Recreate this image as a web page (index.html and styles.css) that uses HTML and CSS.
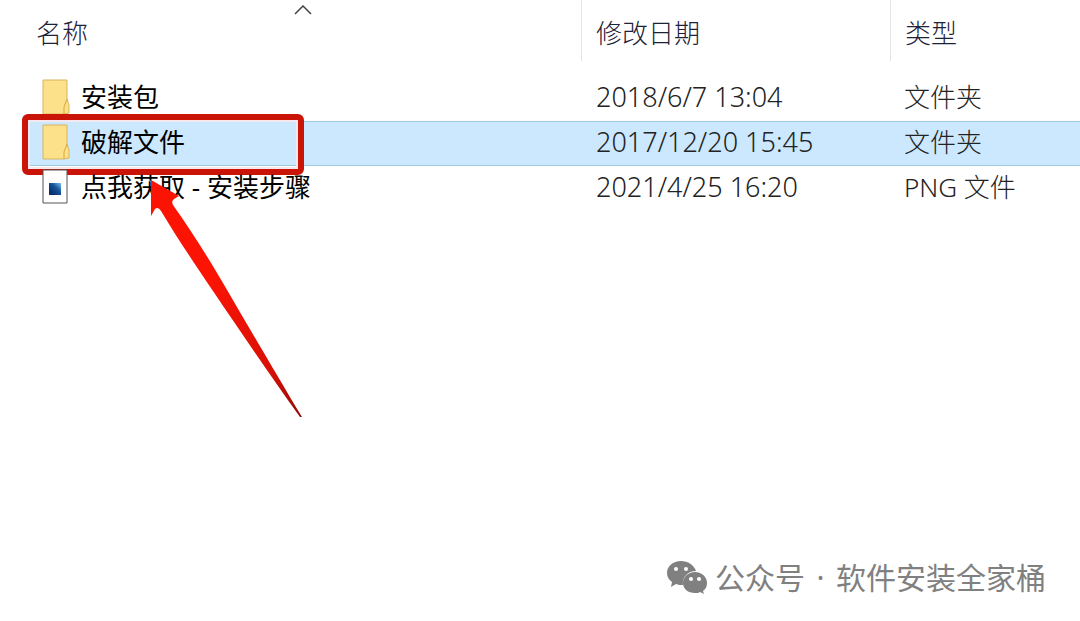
FILE: index.html
```
<!DOCTYPE html>
<html lang="zh-CN">
<head>
  <meta charset="UTF-8" />
  <title>文件列表</title>
  <meta name="viewport" content="width=device-width, initial-scale=1.0">
  <link rel="stylesheet" href="styles.css">
</head>
<body>
  <main class="explorer">
    <table class="file-list">
      <colgroup>
        <col class="col-name">
        <col class="col-date">
        <col class="col-type">
      </colgroup>
      <thead>
        <tr>
          <th class="sorted">名称
            <svg class="sort-arrow" width="18" height="10" viewBox="0 0 18 10"><path d="M1 9 L9 1 L17 9" fill="none" stroke="#444" stroke-width="1.5"/></svg>
          </th>
          <th>修改日期</th>
          <th>类型</th>
        </tr>
      </thead>
      <tbody>
        <tr>
          <td>
            <div class="file-name">
              <svg class="icon" width="28" height="36" viewBox="0 0 28 36">
                <path d="M1 1H25V20L27 26V34L22 35H1Z" fill="#fce08a" stroke="#d9b45c"/>
                <path d="M22 35V28L25 20" fill="none" stroke="#d9a93c"/>
              </svg>
              <span>安装包</span>
            </div>
          </td>
          <td class="date">2018/6/7 13:04</td>
          <td>文件夹</td>
        </tr>
        <tr class="selected">
          <td>
            <div class="file-name">
              <svg class="icon" width="28" height="36" viewBox="0 0 28 36">
                <path d="M1 1H25V20L27 26V34L22 35H1Z" fill="#fce08a" stroke="#d9b45c"/>
                <path d="M22 35V28L25 20" fill="none" stroke="#d9a93c"/>
              </svg>
              <span>破解文件</span>
            </div>
            <div class="mark"></div>
          </td>
          <td class="date">2017/12/20 15:45</td>
          <td>文件夹</td>
        </tr>
        <tr>
          <td>
            <div class="file-name">
              <svg class="icon" width="28" height="36" viewBox="0 0 28 36">
                <defs>
                  <linearGradient id="photo" x1="0" y1="1" x2="1" y2="0">
                    <stop offset="0.2" stop-color="#08306c"/>
                    <stop offset="0.6" stop-color="#17569c"/>
                    <stop offset="1" stop-color="#7cc0ee"/>
                  </linearGradient>
                </defs>
                <path d="M1 1H25V34H1Z" fill="#fff" stroke="#555"/>
                <path d="M7 14H19V26H7Z" fill="url(#photo)"/>
              </svg>
              <span>点我获取 - 安装步骤</span>
            </div>
          </td>
          <td class="date">2021/4/25 16:20</td>
          <td>PNG 文件</td>
        </tr>
      </tbody>
    </table>

    <svg class="pointer" width="156" height="242" viewBox="0 0 156 242">
      <defs>
        <linearGradient id="red" x1="0" y1="0" x2="1" y2="1">
          <stop offset="0.4" stop-color="#fb1404"/>
          <stop offset="0.8" stop-color="#d81006"/>
          <stop offset="1" stop-color="#900a06"/>
        </linearGradient>
      </defs>
      <path d="M5 3 L33 19 L28 22 Q25 24 27 28 C46 55 62 80 84 118 C105 154 133 202 156 240 L154 240 C124 198 94 154 67 114 C46 83 30 59 15 34 Q12 29 9 32 L5 39 Z" fill="url(#red)"/>
    </svg>

    <footer class="account">
      <svg width="42" height="36" viewBox="0 0 42 36">
        <path d="M15 1C7 1 1 6 1 13C1 17 3 20 6 22L5 27L10 24C12 25 15 25 17 25C16 17 22 11 30 11C28 5 22 1 15 1Z" fill="#808080"/>
        <path d="M29 12C22 12 17 17 17 23C17 29 22 33 29 33C31 33 33 33 34 32L38 34L37 31C40 29 41 26 41 23C41 17 36 12 29 12Z" fill="#808080"/>
        <g fill="#fff">
          <circle cx="10" cy="9" r="2"/>
          <circle cx="20" cy="9" r="2"/>
          <circle cx="25" cy="19" r="2"/>
          <circle cx="33" cy="19" r="2"/>
        </g>
      </svg>
      <span>公众号</span>
      <span class="dot">·</span>
      <span>软件安装全家桶</span>
    </footer>
  </main>
</body>
</html>
```
FILE: styles.css
```
body {
  margin: 0;
  background: #fff;
  color: #222;
  font-family: "Noto Sans", "Noto Sans CJK SC", sans-serif;
  font-size: 26px;
  line-height: 36px;
}

.explorer {
  position: relative;
  display: flex;
  flex-direction: column;
  justify-content: space-between;
  min-height: 100vh;
  padding-left: 30px;
  box-sizing: border-box;
}

.file-list {
  width: 100%;
  table-layout: fixed;
  border-collapse: separate;
  border-spacing: 0;
}

.col-name {
  width: 551px;
}

.col-date {
  width: 309px;
}

.file-list th {
  position: relative;
  height: 61px;
  padding: 4px 14px 0;
  box-sizing: border-box;
  border-left: 1px solid #e4e4e4;
  color: #1c2238;
  font-weight: 300;
  text-align: left;
}

.file-list th.sorted {
  padding-left: 6px;
  border-left: none;
}

.sort-arrow {
  position: absolute;
  top: 5px;
  left: 264px;
}

/* gap between the header and the first row */
.file-list tbody::before {
  content: "";
  display: table-row;
  height: 15px;
}

.file-list td {
  height: 45px;
  padding: 0 14px 4px;
  box-sizing: border-box;
  font-weight: 300;
  white-space: nowrap;
}

.file-list td:first-child {
  position: relative;
  padding-left: 12px;
}

.file-list .date {
  padding-left: 15px;
  font-size: 27px;
}

.file-name {
  display: flex;
  align-items: center;
  gap: 11px;
  color: #000;
  font-weight: 400;
}

.selected td {
  background: #cce8ff;
  border-top: 1px solid #9fc8e2;
  border-bottom: 1px solid #9fc8e2;
}

.mark {
  position: absolute;
  top: -8px;
  left: -8px;
  width: 282px;
  height: 61px;
  box-sizing: border-box;
  border: 6px solid #cb1408;
  border-radius: 6px;
  box-shadow: inset 0 0 0 2px #f6e6ee;
}

.pointer {
  position: absolute;
  top: 177px;
  left: 146px;
}

.account {
  display: flex;
  align-items: center;
  justify-content: flex-end;
  padding: 0 34px 25px;
  color: #808080;
  font-size: 30px;
}

.account svg {
  margin-right: 7px;
}

.dot {
  width: 31px;
  text-align: center;
}
```
